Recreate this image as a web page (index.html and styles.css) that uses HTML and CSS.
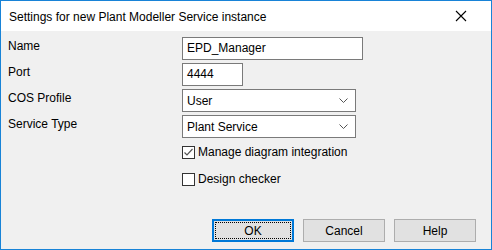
FILE: index.html
```
<!DOCTYPE html>
<html lang="en">
<head>
    <meta charset="UTF-8">
    <title>Settings for new Plant Modeller Service instance</title>
    <link rel="stylesheet" href="styles.css">
</head>
<body>
    <div class="dialog">
        <div class="title-bar">
            <span class="title">Settings for new Plant Modeller Service instance</span>
            <svg class="close" width="12" height="12" viewBox="0 0 12 12">
                <path d="M1 1 L11 11 M11 1 L1 11" stroke="#000" stroke-width="1.1" fill="none"/>
            </svg>
        </div>
        <div class="content">
            <div class="form-grid">
                <label class="field-label">Name</label>
                <div class="text-box name-box">EPD_Manager</div>

                <label class="field-label">Port</label>
                <div class="text-box port-box">4444</div>

                <label class="field-label">COS Profile</label>
                <div class="combo">
                    <span>User</span>
                    <svg class="chevron" width="9" height="5" viewBox="0 0 9 5"><path d="M0.5 0.5 L4.5 4.5 L8.5 0.5" stroke="#555" fill="none"/></svg>
                </div>

                <label class="field-label">Service Type</label>
                <div class="combo">
                    <span>Plant Service</span>
                    <svg class="chevron" width="9" height="5" viewBox="0 0 9 5"><path d="M0.5 0.5 L4.5 4.5 L8.5 0.5" stroke="#555" fill="none"/></svg>
                </div>
            </div>

            <div class="checks">
                <label class="check">
                    <span class="check-box">
                        <svg width="11" height="11" viewBox="0 0 11 11"><path d="M1.5 5.5 L4 8 L9.5 2" stroke="#555" stroke-width="1.2" fill="none"/></svg>
                    </span>
                    Manage diagram integration
                </label>
                <label class="check">
                    <span class="check-box"></span>
                    Design checker
                </label>
            </div>

            <div class="button-row">
                <button class="btn btn-default" type="button"><span class="focus">OK</span></button>
                <button class="btn" type="button">Cancel</button>
                <button class="btn" type="button">Help</button>
            </div>
        </div>
    </div>
</body>
</html>
```
FILE: styles.css
```
html, body {
    margin: 0;
    padding: 0;
}
body {
    font-family: "Segoe UI", "Liberation Sans", Arial, sans-serif;
    font-size: 12px;
    color: #000;
}
.dialog {
    width: 490px;
    height: 248px;
    border: 1px solid #1883d7;
    background-color: #f0f0f0;
    display: flex;
    flex-direction: column;
}
.title-bar {
    height: 30px;
    background-color: #fff;
    display: flex;
    align-items: center;
    justify-content: space-between;
    padding: 0 24px 0 8px;
    flex-shrink: 0;
}
.title {
    font-size: 12px;
    color: #000;
    margin-top: 1px;
}
.close {
    display: block;
}
.content {
    flex: 1;
    padding: 6px 15px 0 7px;
    display: flex;
    flex-direction: column;
}
.form-grid {
    display: grid;
    grid-template-columns: 174px auto;
    grid-auto-rows: 23px;
    row-gap: 3px;
    align-items: start;
}
.field-label {
    line-height: 15px;
    padding-top: 2px;
}
.text-box, .combo {
    box-sizing: border-box;
    height: 23px;
    border: 1px solid #7a7a7a;
    background-color: #fff;
    line-height: 20px;
    padding: 0 4px;
}
.name-box {
    width: 181px;
}
.port-box {
    width: 61px;
}
.combo {
    width: 174px;
    display: flex;
    align-items: center;
    justify-content: space-between;
    padding-right: 7px;
}
.chevron {
    display: block;
}
.checks {
    margin-top: 8px;
    padding-left: 174px;
    display: flex;
    flex-direction: column;
    gap: 14px;
}
.check {
    display: flex;
    align-items: center;
    height: 13px;
    line-height: 13px;
}
.check-box {
    box-sizing: border-box;
    width: 13px;
    height: 13px;
    border: 1px solid #333;
    background-color: #fff;
    margin-right: 3px;
    display: flex;
    align-items: center;
    justify-content: center;
}
.check-box svg {
    display: block;
}
.button-row {
    margin-top: 33px;
    display: flex;
    justify-content: flex-end;
    gap: 9px;
}
.btn {
    box-sizing: border-box;
    width: 82px;
    height: 23px;
    border: 1px solid #adadad;
    background-color: #e1e1e1;
    font-family: inherit;
    font-size: 12px;
    color: #000;
    padding: 0;
    margin: 0;
}
.btn-default {
    border: 2px solid #0078d7;
    padding: 1px;
}
.focus {
    display: flex;
    align-items: center;
    justify-content: center;
    width: 100%;
    height: 100%;
    box-sizing: border-box;
    border: 1px dotted #000;
}
```
